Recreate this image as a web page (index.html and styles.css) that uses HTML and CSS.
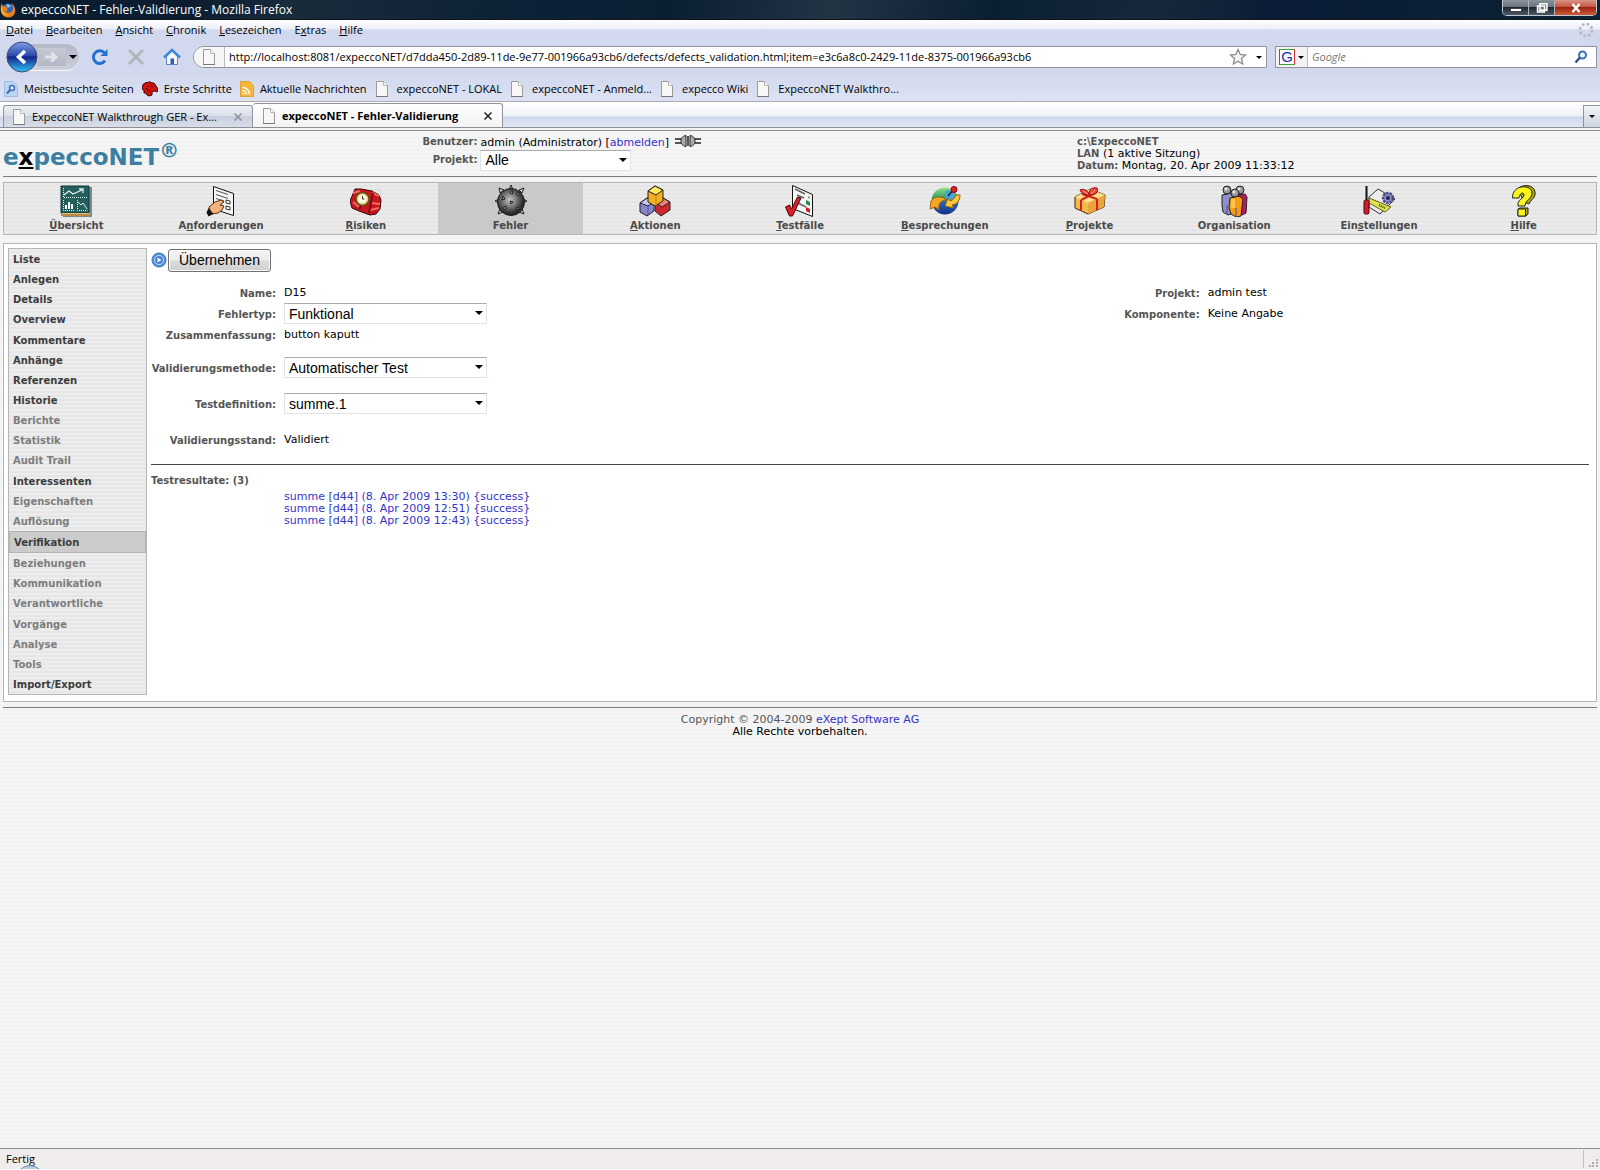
FILE: index.html
```html
<!DOCTYPE html>
<html lang="de">
<head>
    <meta charset="UTF-8">
    <meta name="viewport" content="width=device-width, initial-scale=1.0">
    <title>expeccoNET - Fehler-Validierung</title>
    <link rel="stylesheet" href="styles.css">
</head>
<body>
    <!-- Shared symbols -->
    <svg class="defs" width="0" height="0" aria-hidden="true">
        <symbol id="page" viewBox="0 0 14 16">
            <path d="M1.5 .5h7l4 4v11h-11z" fill="#f7f7f5" stroke="#9a9a9a"/>
            <path d="M8.500 .5v4h4" fill="#fff" stroke="#b5b5b5"/>
            <path d="M1 15.500h12" stroke="#777"/>
        </symbol>
        <symbol id="cross" viewBox="0 0 10 10">
            <path d="M1.500 1.500l7 7M8.500 1.500l-7 7" fill="none" stroke="currentColor" stroke-width="1.500"/>
        </symbol>
    </svg>

    <!-- Browser window -->
    <div class="titlebar">
        <svg class="firefox" viewBox="0 0 16 16">
            <circle cx="8" cy="8" r="6.500" fill="#2d62b8"/>
            <path d="M6 3c2-1 5 0 6 2-2-1-3 0-4 1z" fill="#8bc5f0"/>
            <path d="M1 3C0 8 1 15 8 15.500c6 0 8-5 7-9-1-4-3-5-4-5 2 2 3 5 1 7.500-2 2.500-6 2-6.500-.5 1 .5 2 .3 3-.7-2 0-2-1-1-2C6 5 5 4 4 4 2 4 2 2 2 1z" fill="#e8811a"/>
            <path d="M2 4c-.5 5 2 9 7 9-5 1.500-8-2-8-6z" fill="#fbc53c"/>
        </svg>
        <span class="window-title">expeccoNET - Fehler-Validierung - Mozilla Firefox</span>
        <div class="window-buttons">
            <button type="button" class="wb" aria-label="Minimieren"><svg viewBox="0 0 14 10"><rect x="1.500" y="5.500" width="11" height="3" fill="#fff" stroke="#444"/></svg></button>
            <button type="button" class="wb" aria-label="Wiederherstellen"><svg viewBox="0 0 14 10"><path d="M5 .7h7v6.500h-7zM2.500 3h7v6h-7z" fill="#777" stroke="#fff" stroke-width="1.500"/></svg></button>
            <button type="button" class="wb wb-close" aria-label="Schließen"><svg viewBox="0 0 14 10"><path d="M3.500 1l7 8M10.500 1l-7 8" stroke="#fff" stroke-width="2.500"/></svg></button>
        </div>
    </div>

    <div class="toolbars">
        <div class="menubar">
            <button type="button"><u>D</u>atei</button>
            <button type="button"><u>B</u>earbeiten</button>
            <button type="button"><u>A</u>nsicht</button>
            <button type="button"><u>C</u>hronik</button>
            <button type="button"><u>L</u>esezeichen</button>
            <button type="button">E<u>x</u>tras</button>
            <button type="button"><u>H</u>ilfe</button>
            <svg class="throbber" viewBox="0 0 16 16"><circle cx="8" cy="8" r="6" fill="none" stroke="#b4b6c0" stroke-width="2.500" stroke-dasharray="2.500 2.200"/></svg>
        </div>

        <div class="navrow">
            <div class="history">
                <button type="button" class="back" aria-label="Zurück"><svg viewBox="0 0 32 32">
                    <defs><linearGradient id="bk" x2="0" y2="1"><stop offset="0" stop-color="#7e9be0"/><stop offset=".45" stop-color="#2c4bb0"/><stop offset=".5" stop-color="#12258c"/><stop offset="1" stop-color="#35c4f4"/></linearGradient></defs>
                    <circle cx="16" cy="16" r="15" fill="url(#bk)" stroke="#3a4a78"/>
                    <path d="M19 10l-6.500 6 6.500 6" fill="none" stroke="#fff" stroke-width="3.500"/>
                </svg></button>
                <button type="button" class="forward" aria-label="Vor"><svg viewBox="0 0 16 16"><path d="M1 8h9M7 3.500l5 4.500-5 4.500" fill="none" stroke="#e3e4e8" stroke-width="3"/></svg></button>
                <button type="button" class="drop" aria-label="Verlauf"><i class="arrow"></i></button>
            </div>
            <button type="button" class="tool" aria-label="Neu laden"><svg viewBox="0 0 18 18"><path d="M14 12.500A6.300 6.300 0 1 1 13 4.500" fill="none" stroke="#2370cf" stroke-width="3"/><path d="M16.500 1v7h-7z" fill="#2370cf"/></svg></button>
            <button type="button" class="tool" aria-label="Stopp"><svg viewBox="0 0 18 18"><path d="M2 2l14 14M16 2L2 16" stroke="#b2b4bb" stroke-width="3"/></svg></button>
            <button type="button" class="tool" aria-label="Startseite"><svg viewBox="0 0 18 18"><path d="M3.500 8.500v8h11v-8L9 3z" fill="#f2f6fc" stroke="#5b84c4"/><path d="M1 9.500L9 2l8 7.500" fill="none" stroke="#3f86dd" stroke-width="2.500"/><path d="M7.500 16v-5.500h3.500V16z" fill="#345fa8"/></svg></button>
            <div class="urlbar">
                <span class="site"><svg width="14" height="16"><use href="#page"/></svg></span>
                <input type="text" aria-label="Adresse" value="http://localhost:8081/expeccoNET/d7dda450-2d89-11de-9e77-001966a93cb6/defects/defects_validation.html;item=e3c6a8c0-2429-11de-8375-001966a93cb6">
                <svg class="star" viewBox="0 0 18 18"><path d="M9 1.500l2.200 5 5.300.5-4 3.600 1.200 5.400L9 13.200 4.300 16l1.200-5.400-4-3.600 5.300-.5z" fill="#f4f4f4" stroke="#8c8c8c" stroke-width="1.300"/></svg>
                <i class="arrow small"></i>
            </div>
            <div class="searchbar">
                <span class="engine"><span class="g">G</span><i class="arrow small"></i></span>
                <input type="text" aria-label="Suche" placeholder="Google">
                <svg class="lens" viewBox="0 0 14 14"><circle cx="8.500" cy="5" r="3.500" fill="#eef5fd" stroke="#3e6fb2" stroke-width="2"/><path d="M6 7.500L1.500 12.500" stroke="#3a4f86" stroke-width="2.500"/></svg>
            </div>
        </div>

        <div class="bookmarks">
            <a href="#"><svg width="14" height="16" viewBox="0 0 14 16"><path d="M.5 .5h8.500l4.500 4.500v10.500h-13z" fill="#b9d5f1" stroke="#9bbfe4"/><circle cx="8" cy="7" r="2.500" fill="#dcebf9" stroke="#3d6eae" stroke-width="1.500"/><path d="M6 9l-3 3.500" stroke="#3d6eae" stroke-width="2"/></svg>Meistbesuchte Seiten</a>
            <a href="#"><svg width="16" height="16" viewBox="0 0 16 16"><path d="M1 3.500l3-2 2 0 1-1 3 1.500 2 0 2 3 2 3-1 3-2-1-1 0-2 1 0 3-3 1-2-1-1-2-2 0 0-3-2-1z" fill="#d3130d" stroke="#3b0503"/><path d="M5 4l2 2M9 5l2 1M4 7l2 3M8 9l-1 2" stroke="#3b0503"/></svg>Erste Schritte</a>
            <a href="#"><svg width="14" height="16" viewBox="0 0 14 16"><path d="M.5 .5h9l4 4v11h-13z" fill="#f5b73c" stroke="#e0a030"/><path d="M2.500 6.500a7 7 0 0 1 7 7M2.500 9.500a4 4 0 0 1 4 4" fill="none" stroke="#fff" stroke-width="1.500"/><circle cx="3.500" cy="12.500" r="1" fill="#fff"/></svg>Aktuelle Nachrichten</a>
            <a href="#" class="plain"><svg width="14" height="16"><use href="#page"/></svg>expeccoNET - LOKAL</a>
            <a href="#" class="plain"><svg width="14" height="16"><use href="#page"/></svg>expeccoNET - Anmeld...</a>
            <a href="#" class="plain"><svg width="14" height="16"><use href="#page"/></svg>expecco Wiki</a>
            <a href="#" class="plain"><svg width="14" height="16"><use href="#page"/></svg>ExpeccoNET Walkthro...</a>
        </div>
    </div>

    <div class="tabbar">
        <div class="tab"><svg width="14" height="16"><use href="#page"/></svg><span>ExpeccoNET Walkthrough GER - Ex...</span><button type="button" aria-label="Tab schließen"><svg width="10" height="10"><use href="#cross"/></svg></button></div>
        <div class="tab current"><svg width="14" height="16"><use href="#page"/></svg><span>expeccoNET - Fehler-Validierung</span><button type="button" aria-label="Tab schließen"><svg width="10" height="10"><use href="#cross"/></svg></button></div>
        <button type="button" class="alltabs" aria-label="Alle Tabs"><i class="arrow small"></i></button>
    </div>

    <!-- Web page -->
    <div class="page">
        <header class="header">
            <div class="logo">e<u>x</u>peccoNET<sup>®</sup></div>
            <div class="user">
                <b>Benutzer:</b>
                <span>admin (Administrator) [<a href="#">abmelden</a>] <svg class="plug" viewBox="0 0 26 12"><path d="M0 4h7M0 8h7M19 4h7M19 8h7" stroke="#222" stroke-width="1.500"/><path d="M11 .5C7 1 6 4 6 6s1 5 5 5.500zM15 .5c4 .5 5 3.500 5 5.500s-1 5-5 5.500z" fill="#aaa" stroke="#222"/><path d="M13 1v10" stroke="#222" stroke-width="1.500"/></svg></span>
                <label for="projekt">Projekt:</label>
                <span class="select"><select id="projekt"><option>Alle</option></select></span>
            </div>
            <div class="session">
                <b>c:\ExpeccoNET</b><br>
                <b>LAN</b> (1 aktive Sitzung)<br>
                <b>Datum:</b> Montag, 20. Apr 2009 11:33:12
            </div>
        </header>

        <nav class="mainnav">
            <a href="#">
                <svg viewBox="0 0 32 32"><path d="M3 2h29v30H3z" fill="#7e8a88"/><path d="M1 1h28v27H1z" fill="#23605d" stroke="#123b39"/><path d="M1 28h29v3H1z" fill="#b88b46"/><path d="M2 28.500h28" stroke="#e0c07e"/><path d="M3.500 3v9.500h24M3.500 15v10.500h11M17.500 15v10.500h10" fill="none" stroke="#e4f1ee" stroke-dasharray="1 1"/><path d="M4 10l5-4 4 3 9-4M19 4h4v4" fill="none" stroke="#e4f1ee" stroke-width="1.300"/><path d="M6 20v4M9 17v7M12 19v5" stroke="#fff" stroke-width="2"/><path d="M18 17l3 3 2-2 4 6" fill="none" stroke="#e4f1ee"/></svg>
                <span><u>Ü</u>bersicht</span>
            </a>
            <a href="#">
                <svg viewBox="0 0 32 32"><path d="M8.500 1.500l20 7v22L8.500 24z" fill="#f4f4f2" stroke="#111"/><path d="M11 5.500l12 4M11 9.500l12 4M11 13.500l8 2.500M11 17l6 2" stroke="#555"/><path d="M21 15l4 1v3l-4-1zM21 21l4 1v3l-4-1z" fill="#fff" stroke="#333"/><path d="M4 22l6-5 6-2 3 2-4 3 4 1-2 4-4 3-7 1z" fill="#f4b27c" stroke="#5a2f16"/><path d="M3.500 23l5 6-5 2.500-2-4z" fill="#1c1210"/></svg>
                <span>A<u>n</u>forderungen</span>
            </a>
            <a href="#">
                <svg viewBox="0 0 32 32"><path d="M5 4l6 0 11 2 7 4 2 5-1 9-4 5-6 1-11-4-7-3-2-7z" fill="#c7161d" stroke="#3a0305"/><path d="M3 8l7-2M22 8l7 3M20 25l9-2M3 17l6 5M21 18l9 1" stroke="#f26a60" stroke-width="2"/><path d="M9 24l2-3M19 28l4-20" stroke="#7d0b0f" stroke-width="2"/><path d="M24 7c3-5 8-3 6 4" fill="none" stroke="#ddd" stroke-width="1.500"/><circle cx="12.500" cy="14" r="6.500" fill="#e7d488" stroke="#6a4c18" stroke-width="1.500"/><circle cx="12.500" cy="14" r="4" fill="#fffbe9"/><path d="M12.500 11v3h2" fill="none" stroke="#333"/></svg>
                <span><u>R</u>isiken</span>
            </a>
            <a href="#" class="active">
                <svg viewBox="0 0 32 32"><defs><radialGradient id="mine" cx=".45" cy=".42"><stop offset="0" stop-color="#c4c4c4"/><stop offset=".6" stop-color="#6b6b6b"/><stop offset="1" stop-color="#2c2c2c"/></radialGradient></defs><path d="M14 5l2-5 2 5zM4 14l-4 2 4 2zM28 14l4 2-4 2zM5 8L4 3l5 2zM24 5l5-2-2 5zM5 24l-2 5 5-2zM24 27l5 2-2-5z" fill="#c9c9c9" stroke="#222"/><circle cx="16" cy="17" r="13.500" fill="url(#mine)" stroke="#1b1b1b"/><path d="M8 11l2 3-3 1zM21 9l3-2 0 4zM15 16l3 1-2 2zM8 23l3-2 0 4zM22 22l3 2-3 1zM15 8l2-3 1 4z" fill="#aaa" stroke="#222"/></svg>
                <span>Fehler</span>
            </a>
            <a href="#">
                <svg viewBox="0 0 32 32"><g stroke="#222" stroke-linejoin="round"><path d="M1 18l7-5 7 4v9l-7 5-7-4z" fill="#8786cf"/><path d="M1 18l7-5 7 4-6 4z" fill="#c9c8f3"/><path d="M17 18l7-5 7 4v8l-9 6-6-5z" fill="#cf2730"/><path d="M17 18l7-5 7 4-8 5z" fill="#f5817f"/><path d="M9 6l7-5 8 4v11l-8 5-7-4z" fill="#f4ae21"/><path d="M9 6l7-5 8 4-7 5z" fill="#ffe75a"/></g><path d="M17 10v11" stroke="#c68108"/><path d="M9 21v9" stroke="#55549c"/></svg>
                <span><u>A</u>ktionen</span>
            </a>
            <a href="#">
                <svg viewBox="0 0 32 32"><path d="M8.500 .5l20 9v22l-20-8z" fill="#f5f5f3" stroke="#111"/><path d="M11 4l10 5M13 10l7 3M14 18l8 4" stroke="#666" stroke-width="1.500"/><path d="M24 11l2 1v2l-2-1z" fill="#999"/><path d="M22 15l4 2v4l-4-2z" fill="#218a4a"/><path d="M22 22l4 2v4l-4-2z" fill="#c61c24"/><path d="M1.500 22l4-2 2 4 6-12 3.500 1-8.500 18-3 0z" fill="#d7222b" stroke="#4a0508"/></svg>
                <span><u>T</u>estfälle</span>
            </a>
            <a href="#">
                <svg viewBox="0 0 32 32"><defs><linearGradient id="globe" x2="0" y2="1"><stop offset="0" stop-color="#9ee27c"/><stop offset=".4" stop-color="#2a9a70"/><stop offset=".6" stop-color="#205fb8"/><stop offset="1" stop-color="#143087"/></linearGradient></defs><circle cx="16" cy="16" r="13.500" fill="url(#globe)"/><path d="M17 5c5 0 9 4 9 8l-6 3-4-4z" fill="#4aa2e0"/><path d="M1 24l1-8c3-4 7-5 13-3l2 2c-5 0-8 4-7 10l-4-3z" fill="#f7a623" stroke="#a35d05"/><path d="M31 10c0 6-3 9-8 10l2 3-9-2 3-8 2 3c3-1 5-3 6-6z" fill="#ffc93b" stroke="#a35d05"/><path d="M19 11l5-6" stroke="#222" stroke-width="1.500"/><circle cx="25" cy="4.500" r="3" fill="#e8202c" stroke="#7c0710"/></svg>
                <span><u>B</u>esprechungen</span>
            </a>
            <a href="#">
                <svg viewBox="0 0 32 32"><path d="M1 12l15-8 15 6-1 12-16 7-13-6z" fill="#f5b94d" stroke="#42240a"/><path d="M1 12l15-8 15 6-17 8z" fill="#ffe08a"/><path d="M14 18v11l16-7 1-12z" fill="#e9a640"/><path d="M7 15v11M23 14v11M8 9l15 5M23 7L7 15" stroke="#d9201f" stroke-width="2"/><path d="M16 10C11 10 7 8 6 5c4-2 8 1 9 4 0-5 4-7 8-6 2 4-2 7-7 7z" fill="#f04a3c" stroke="#8d0b0d"/><path d="M9 6l5 3M21 5l-4 4" stroke="#ffb0a0"/></svg>
                <span><u>P</u>rojekte</span>
            </a>
            <a href="#">
                <svg viewBox="0 0 32 32"><g stroke="#222"><path d="M19 10l8-1 2 3-1 16-4 2-5-3z" fill="#b9195d"/><path d="M4 10l10-2 2 3v17l-6 2-5-3-1-7z" fill="#8d90cb"/><path d="M12 13l9-2 4 3-1 8-1 9-5 1-5-3-2-6z" fill="#f79a18"/></g><path d="M9 20v9M18 23v8" stroke="#464a80"/><path d="M13 14h4v9h-4z" fill="#ffc54c"/><g fill="#999" stroke="#222"><circle cx="9" cy="5" r="4"/><circle cx="22" cy="5" r="4"/><circle cx="17" cy="8" r="4"/></g><g fill="#e8e8e8"><circle cx="8" cy="4" r="1.500"/><circle cx="21" cy="4" r="1.500"/><circle cx="16" cy="7" r="1.500"/></g></svg>
                <span>Or<u>g</u>anisation</span>
            </a>
            <a href="#">
                <svg viewBox="0 0 32 32"><path d="M6 12l9-8 17 10-15 15-11-7z" fill="#ededed" stroke="#333"/><path d="M6 13l22 9-6 5L6 18z" fill="#dfe24e" stroke="#5e6112"/><path d="M16 20l6 3" stroke="#333" stroke-dasharray="1 1" stroke-width="2"/><circle cx="25" cy="13" r="5" fill="#8b89c6" stroke="#4b497e" stroke-width="2.500" stroke-dasharray="2.500 1"/><circle cx="25" cy="13" r="2" fill="#26254c"/><path d="M3.500 1V15" stroke="#111" stroke-width="2"/><rect x="1" y="15" width="5" height="14" rx="1.500" fill="#cf1f2a" stroke="#4a0508"/></svg>
                <span>Ein<u>s</u>tellungen</span>
            </a>
            <a href="#">
                <svg viewBox="0 0 32 32"><path d="M10 4c4-5 16-5 17 3 1 6-4 7-6 12l-5-2z" fill="#a9a614" stroke="#222"/><path d="M4.500 13C4 -1 24 -1 24 8c0 6-7 7-7 13H10c-1-7 6-7 6-11 0-3-4-3-5 3z" fill="#fdf51b" stroke="#222" stroke-linejoin="round"/><path d="M10 24l2-1h8v6l-2 2h-8z" fill="#a9a614" stroke="#222"/><path d="M10 24h7.500v7H10z" fill="#fdf51b" stroke="#222"/></svg>
                <span><u>H</u>ilfe</span>
            </a>
        </nav>

        <main class="main">
            <nav class="sidenav">
                <a href="#">Liste</a>
                <a href="#">Anlegen</a>
                <a href="#">Details</a>
                <a href="#">Overview</a>
                <a href="#">Kommentare</a>
                <a href="#">Anhänge</a>
                <a href="#">Referenzen</a>
                <a href="#">Historie</a>
                <a href="#" class="off">Berichte</a>
                <a href="#" class="off">Statistik</a>
                <a href="#" class="off">Audit Trail</a>
                <a href="#">Interessenten</a>
                <a href="#" class="off">Eigenschaften</a>
                <a href="#" class="off">Auflösung</a>
                <a href="#" class="active">Verifikation</a>
                <a href="#" class="off">Beziehungen</a>
                <a href="#" class="off">Kommunikation</a>
                <a href="#" class="off">Verantwortliche</a>
                <a href="#" class="off">Vorgänge</a>
                <a href="#" class="off">Analyse</a>
                <a href="#" class="off">Tools</a>
                <a href="#">Import/Export</a>
            </nav>

            <form class="content">
                <div class="actions">
                    <svg viewBox="0 0 16 16"><circle cx="8" cy="8" r="7" fill="#5f92dc" stroke="#396cb8"/><circle cx="8" cy="8" r="4.500" fill="#4680d4" stroke="#c3dbf8"/><path d="M6.500 5.500v5l4-2.500z" fill="#fff"/></svg>
                    <button type="button" class="apply">Übernehmen</button>
                </div>

                <div class="columns">
                    <div class="fields">
                        <b>Name:</b><span>D15</span>
                        <label for="typ">Fehlertyp:</label>
                        <span class="select"><select id="typ"><option>Funktional</option></select></span>
                        <b>Zusammenfassung:</b><span>button kaputt</span>
                    </div>
                    <div class="fields side">
                        <b>Projekt:</b><span>admin test</span>
                        <b>Komponente:</b><span>Keine Angabe</span>
                    </div>
                </div>

                <div class="fields spaced">
                    <label for="methode">Validierungsmethode:</label>
                    <span class="select"><select id="methode"><option>Automatischer Test</option></select></span>
                    <label for="test">Testdefinition:</label>
                    <span class="select"><select id="test"><option>summe.1</option></select></span>
                    <b>Validierungsstand:</b><span>Validiert</span>
                </div>

                <section class="results">
                    <h2>Testresultate: (3)</h2>
                    <ul>
                        <li><a href="#">summe [d44] (8. Apr 2009 13:30) {success}</a></li>
                        <li><a href="#">summe [d44] (8. Apr 2009 12:51) {success}</a></li>
                        <li><a href="#">summe [d44] (8. Apr 2009 12:43) {success}</a></li>
                    </ul>
                </section>
            </form>
        </main>

        <footer class="footer">
            <span class="muted">Copyright © 2004-2009</span> <a href="#">eXept Software AG</a><br>
            Alle Rechte vorbehalten.
        </footer>
    </div>

    <div class="statusbar">
        <span>Fertig</span>
        <div class="orb"></div>
        <svg class="grip" viewBox="0 0 18 18"><path d="M1.500 0v18" stroke="#c4c0c0"/><path d="M14 9h2v2h-2zM10 12h2v2h-2zM14 12h2v2h-2zM7 15h2v2H7zM10 15h2v2h-2zM14 15h2v2h-2z" fill="#b0acac"/></svg>
    </div>
</body>
</html>
```
FILE: styles.css
```css
:root {
    --ui: "Open Sans", "Noto Sans", sans-serif;
    --web: "DejaVu Sans", sans-serif;
    --link: #3333cc;
    --label: #555555;
    --line: #b5b5b5;
}

* {
    box-sizing: border-box;
}

body {
    margin: 0;
    min-height: 100vh;
    display: flex;
    flex-direction: column;
    font: 11px/16px var(--ui);
    color: #000;
    background: #f3f3f3;
}

.defs {
    position: absolute;
}

svg {
    flex: none;
    display: block;
}

button {
    border: 0;
    padding: 0;
    background: none;
    color: inherit;
    font: inherit;
}

input {
    border: 0;
    padding: 0;
    min-width: 0;
    background: none;
    font: inherit;
    outline: 0;
}

a {
    color: var(--link);
    text-decoration: none;
}

.arrow {
    display: block;
    border: 4px solid transparent;
    border-top-color: #000;
    border-bottom: 0;
}

.arrow.small {
    border-width: 3px;
    border-bottom: 0;
}

/* Title bar */
.titlebar {
    height: 20px;
    display: flex;
    align-items: center;
    padding: 0 3px 0 0;
    color: #fff;
    background: linear-gradient(100deg, #0b1d2f 0%, #0b1d2f 12%, #1a2b3b 18%, #0d2236 32%, #0b1f33 42%, #223344 52%, #0b1f33 62%, #16293a 72%, #0a1c36 80%, #0b2233 100%);
    border-bottom: 1px solid #10161c;
}

.firefox {
    width: 16px;
    height: 16px;
}

.window-title {
    margin-left: 5px;
    font-size: 12px;
}

.window-buttons {
    margin-left: auto;
    align-self: flex-start;
    display: flex;
    height: 16px;
    border: 1px solid #c3c9cf;
    border-top: 0;
    border-radius: 0 0 5px 5px;
    overflow: hidden;
}

.wb {
    width: 26px;
    display: flex;
    align-items: center;
    justify-content: center;
    background: linear-gradient(#8a929a 0, #6a737c 45%, #1c2833 50%, #4c5a66 100%);
    border-right: 1px solid #aab2ba;
}

.wb svg {
    width: 14px;
    height: 10px;
}

.wb-close {
    width: 41px;
    border-right: 0;
    background: linear-gradient(#d99488 0, #c5563f 45%, #9b2310 50%, #cf5b38 100%);
}

/* Menu, navigation and bookmarks */
.toolbars {
    background: linear-gradient(#ffffff 0, #eceffa 9px, #d2d9ee 10px, #d2d9ee 55px, #dde2f3 100%);
    border-bottom: 1px solid #a9abb4;
}

.menubar {
    display: flex;
    align-items: center;
    gap: 13px;
    height: 20px;
    padding: 0 6px;
}

.throbber {
    width: 16px;
    height: 16px;
    margin-left: auto;
}

.navrow {
    display: flex;
    align-items: center;
    height: 34px;
    padding: 0 3px 0 6px;
}

.history {
    display: flex;
    align-items: center;
    height: 26px;
    width: 73px;
    border-radius: 13px;
    background: linear-gradient(#b3b7c6, #cdd1de);
    box-shadow: 0 1px 0 #f4f6fc;
    margin-right: 12px;
}

.back,
.back svg {
    width: 32px;
    height: 32px;
    display: block;
}

.forward {
    width: 28px;
    height: 18px;
    display: flex;
    align-items: center;
    justify-content: center;
    background: linear-gradient(#c6cad5, #b4b8c4);
}

.forward svg {
    width: 16px;
}

.drop {
    padding-left: 3px;
}

.tool + .tool {
    margin-left: 18px;
}

.tool svg {
    width: 18px;
    height: 18px;
}

.urlbar,
.searchbar {
    display: flex;
    align-items: center;
    height: 22px;
    background: #fff;
    border: 1px solid #90939c;
}

.urlbar {
    flex: 1;
    border-radius: 11px 0 0 11px;
    padding-right: 4px;
    margin: 0 8px 0 12px;
    overflow: hidden;
}

.urlbar input,
.searchbar input {
    flex: 1;
    padding-left: 4px;
}

.site {
    width: 31px;
    height: 20px;
    display: flex;
    align-items: center;
    justify-content: center;
    border-right: 1px solid #b9bbc2;
    background: #f6f6f6;
}

.star {
    width: 18px;
    height: 18px;
    margin-right: 9px;
}

.searchbar {
    flex: 0 1 322px;
    padding-right: 8px;
}

.searchbar input::placeholder {
    color: #777;
    font-style: italic;
    opacity: 1;
}

.engine {
    display: flex;
    align-items: center;
    gap: 3px;
    height: 20px;
    padding: 0 3px;
    background: #f3f3f3;
    border-right: 1px solid #b9bbc2;
}

.g {
    width: 16px;
    height: 16px;
    border: 1px solid #3aa23a;
    border-right-color: #d32b2b;
    border-left-color: #3a5fd3;
    background: #fff;
    color: #1a2fb5;
    font: 15px/14px "Liberation Sans", Arial, sans-serif;
    text-align: center;
}

.lens {
    width: 14px;
    height: 14px;
}

.bookmarks {
    display: flex;
    align-items: center;
    gap: 8px;
    height: 27px;
    padding: 3px 4px 0;
}

.bookmarks a {
    display: flex;
    align-items: center;
    gap: 6px;
    color: #000;
}

.bookmarks .plain {
    gap: 8px;
}

/* Tabs */
.tabbar {
    display: flex;
    align-items: flex-end;
    height: 26px;
    padding-left: 3px;
    background: linear-gradient(#ffffff 0, #eef1f9 14px, #cfd7eb 15px, #e0e7f8 100%);
    border-bottom: 1px solid #8e8e94;
}

.tab {
    display: flex;
    align-items: center;
    width: 250px;
    height: 22px;
    padding: 0 9px 0 8px;
    border: 1px solid #92949c;
    border-bottom: 0;
    border-radius: 3px 3px 0 0;
    background: linear-gradient(#eceef4 0, #dde1ec 45%, #c9cfdf 50%, #d9deea 100%);
}

.tab span {
    margin-left: 6px;
    white-space: nowrap;
}

.tab button {
    margin-left: auto;
    color: #8d8f96;
}

.tab.current {
    height: 24px;
    padding-left: 9px;
    border-left: 0;
    background: linear-gradient(#ffffff, #f3f3f3);
    font-weight: bold;
}

.tab.current button {
    color: #222;
}

.alltabs {
    margin-left: auto;
    width: 17px;
    height: 22px;
    display: flex;
    align-items: center;
    justify-content: center;
    border: 1px solid #92949c;
    border-width: 1px 0 0 1px;
    background: linear-gradient(#f4f5f9, #cdd3e2);
}

/* Web page */
.page {
    flex: 1;
    margin-top: 2px;
    padding: 0 3px;
    border-top: 1px solid #8e8e94;
    background: repeating-linear-gradient(#f5f5f5 0, #f5f5f5 2px, #f2f2f2 2px, #f2f2f2 4px);
    font: 11px/12px var(--web);
}

.header {
    display: grid;
    grid-template-columns: 26% 41% 1fr;
    height: 46px;
    border-bottom: 1px solid #7c7c7c;
}

.logo {
    color: #3d7fa1;
    font-size: 23px;
    font-weight: bold;
    line-height: 34px;
    padding-top: 9px;
}

.logo u {
    color: #000;
}

.logo sup {
    font-size: 20px;
    line-height: 0;
    vertical-align: 8px;
}

.user {
    display: grid;
    grid-template-columns: 60px 1fr;
    grid-template-rows: 16px 20px;
    column-gap: 3px;
    align-items: center;
    align-content: start;
    padding-top: 3px;
}

.user b,
.user label {
    text-align: right;
}

b,
label {
    color: var(--label);
    font-size: 10px;
    font-weight: bold;
}

.user .select {
    width: 151px;
}

.plug {
    display: inline-block;
    width: 26px;
    height: 12px;
    vertical-align: -1px;
    margin-left: 2px;
}

.session {
    padding: 5px 0 0 6px;
}

.select {
    position: relative;
    display: block;
    width: 203px;
}

.select::after {
    content: "";
    position: absolute;
    right: 4px;
    top: 8px;
    border: 4px solid transparent;
    border-top-color: #000;
    border-bottom: 0;
    pointer-events: none;
}

select {
    display: block;
    width: 100%;
    height: 21px;
    padding: 0 4px;
    appearance: none;
    border: 1px solid #e0e3e8;
    border-top-color: #ababb0;
    border-radius: 0;
    background: #fff;
    color: #000;
    font: 14px/18px "Liberation Sans", Arial, sans-serif;
}

.mainnav {
    display: flex;
    margin-top: 5px;
    border: 1px solid var(--line);
    background: repeating-linear-gradient(#ebebeb 0, #ebebeb 2px, #e5e5e5 2px, #e5e5e5 4px);
}

.mainnav a {
    flex: 1;
    display: flex;
    flex-direction: column;
    align-items: center;
    gap: 1px;
    padding-top: 2px;
    color: #4a4a4a;
    font-size: 10px;
    font-weight: bold;
    line-height: 16px;
}

.mainnav a.active {
    background: #c9c9c9;
}

.mainnav svg {
    width: 32px;
    height: 32px;
}

.main {
    display: flex;
    gap: 4px;
    margin-top: 8px;
    padding: 4px 7px 6px 4px;
    background: #fff;
    border: 1px solid var(--line);
}

.sidenav {
    flex: none;
    width: 139px;
    min-height: 447px;
    display: flex;
    flex-direction: column;
    border: 1px solid var(--line);
    background: repeating-linear-gradient(#ededed 0, #ededed 2px, #e6e6e6 2px, #e6e6e6 4px);
}

.sidenav a {
    flex: 1 0 20px;
    display: flex;
    align-items: center;
    padding: 2px 4px 0;
    color: #3c3c3c;
    font-size: 10px;
    font-weight: bold;
}

.sidenav a.off {
    color: #7d7d7d;
}

.sidenav a.active {
    flex-basis: 22px;
    border: 1px solid #b3b3b3;
    background: #cbcbcb;
}

/* Form */
.content {
    flex: 1;
    min-width: 0;
}

.actions {
    display: flex;
    align-items: center;
    gap: 1px;
    height: 24px;
}

.actions svg {
    width: 16px;
    height: 16px;
}

.apply {
    height: 23px;
    padding: 0 10px;
    border: 1px solid #707070;
    border-radius: 3px;
    background: linear-gradient(#f4f4f4 0, #ececec 48%, #dcdcdc 52%, #cfcfcf 100%);
    box-shadow: inset 0 0 0 1px #fbfbfb;
    color: #000;
    font: 14px/18px "Liberation Sans", Arial, sans-serif;
}

.columns {
    display: grid;
    grid-template-columns: 2fr 1fr;
    margin-top: 10px;
}

.fields {
    display: grid;
    grid-template-columns: 125px 1fr;
    grid-auto-rows: 21px;
    column-gap: 8px;
    align-items: center;
    align-content: start;
}

.fields b,
.fields label {
    padding-top: 2px;
    text-align: right;
    white-space: nowrap;
}

.fields.side {
    grid-template-columns: 90px 1fr;
}

.fields.spaced {
    margin-top: 12px;
    row-gap: 15px;
}

.results {
    margin-top: 14px;
    border-top: 1px solid #444;
}

.results h2 {
    margin: 10px 0 4px;
    color: var(--label);
    font-size: 10px;
    line-height: 12px;
}

.results ul {
    margin: 0;
    padding: 0 0 0 133px;
    list-style: none;
}

.footer {
    margin-top: 5px;
    padding-top: 6px;
    border-top: 1px solid #7c7c7c;
    text-align: center;
}

.muted {
    color: #555;
}

/* Status bar */
.statusbar {
    position: relative;
    display: flex;
    align-items: center;
    justify-content: space-between;
    height: 22px;
    padding: 0 0 0 6px;
    border-top: 1px solid #8e8e8e;
    border-bottom: 1px solid #fff;
    background: #f0eceb;
    overflow: hidden;
}

.orb {
    position: absolute;
    left: 16px;
    bottom: -24px;
    width: 28px;
    height: 28px;
    border: 1px solid #6f8c9c;
    border-radius: 50%;
    background: #b9d0dc;
}

.grip {
    width: 18px;
    height: 18px;
}
```
